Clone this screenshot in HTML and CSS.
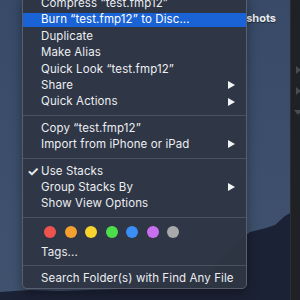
FILE: index.html
```html
<!DOCTYPE html>
<html>
<head>
<meta charset="utf-8">
<link rel="stylesheet" href="styles.css">
</head>
<body>
<div class="desktop">
  <div class="mountain"></div>
  <div class="icon-label">Screenshots</div>
  <div class="window">
    <span class="tri t1"></span>
    <span class="tri t2"></span>
    <span class="tri t3"></span>
  </div>
  <div class="menu">
    <div class="row">Compress “test.fmp12”</div>
    <div class="row active">Burn “test.fmp12” to Disc...</div>
    <div class="row">Duplicate</div>
    <div class="row">Make Alias</div>
    <div class="row">Quick Look “test.fmp12”</div>
    <div class="row sub">Share</div>
    <div class="row sub">Quick Actions</div>
    <div class="sep"></div>
    <div class="row">Copy “test.fmp12”</div>
    <div class="row sub">Import from iPhone or iPad</div>
    <div class="sep"></div>
    <div class="row checked">Use Stacks</div>
    <div class="row sub">Group Stacks By</div>
    <div class="row">Show View Options</div>
    <div class="sep"></div>
    <div class="tags">
      <span class="dot red"></span>
      <span class="dot orange"></span>
      <span class="dot yellow"></span>
      <span class="dot green"></span>
      <span class="dot blue"></span>
      <span class="dot purple"></span>
      <span class="dot gray"></span>
    </div>
    <div class="row">Tags...</div>
    <div class="sep"></div>
    <div class="row">Search Folder(s) with Find Any File</div>
  </div>
</div>
</body>
</html>
```
FILE: styles.css
```css
html, body {
  margin: 0;
  padding: 0;
}
body {
  width: 300px;
  height: 300px;
  overflow: hidden;
  font-family: Inter, "Liberation Sans", sans-serif;
}
.desktop {
  position: relative;
  width: 300px;
  height: 300px;
  background: linear-gradient(180deg, #384a68 0%, #3c4e6b 50%, #40526e 100%);
  overflow: hidden;
}
.mountain {
  position: absolute;
  inset: 0;
  background: #1c2235;
  clip-path: polygon(0 292px, 30px 290px, 60px 291px, 120px 289px, 200px 280px, 240px 240px, 250px 232px, 258px 230px, 266px 228px, 275px 225px, 285px 216px, 292px 212px, 300px 210px, 300px 300px, 0 300px);
}
.icon-label {
  position: absolute;
  top: 11px;
  right: 24px;
  font-size: 11px;
  font-weight: 700;
  color: #e8ecf2;
  text-shadow: 0 1px 1px rgba(0,0,0,0.5);
}
.window {
  position: absolute;
  top: 0;
  left: 290px;
  width: 10px;
  height: 300px;
  background: #202124;
  border-left: 1px solid #2c2d30;
}
.tri {
  position: absolute;
  left: 5px;
  width: 0;
  height: 0;
  border-top: 4px solid transparent;
  border-bottom: 4px solid transparent;
  border-left: 5px solid #4a4b4f;
}
.t1 { top: 66px; }
.t2 { top: 87px; }
.t3 {
  top: 110px;
  border-left: 4px solid transparent;
  border-right: 4px solid transparent;
  border-top: 5px solid #4a4b4f;
  border-bottom: 0;
  left: 3px;
}
.menu {
  position: absolute;
  left: 22px;
  top: -6px;
  width: 225px;
  box-sizing: border-box;
  padding-bottom: 2px;
  background: rgba(46, 54, 68, 0.97);
  border: 1px solid #59606c;
  border-radius: 5px;
  box-shadow: 0 4px 12px rgba(0,0,0,0.35);
  color: #eceef1;
  font-size: 11.5px;
  letter-spacing: 0.1px;
}
.row {
  position: relative;
  height: 16.4px;
  line-height: 16.4px;
  padding: 0 11px 0 18px;
  white-space: nowrap;
}
.row.active {
  color: #ffffff;
  background: linear-gradient(#1a63d6, #1a63d6) 0 1.2px / 100% 14px no-repeat;
}
.row.sub::after {
  content: "";
  position: absolute;
  right: 11px;
  top: 50%;
  margin-top: -4px;
  border-top: 4px solid transparent;
  border-bottom: 4px solid transparent;
  border-left: 7px solid #f2f3f5;
}
.row.checked::before {
  content: "✓";
  position: absolute;
  left: 4px;
  font-size: 13.5px;
  font-weight: 700;
}
.sep {
  height: 10px;
  position: relative;
}
.sep::after {
  content: "";
  position: absolute;
  left: 0;
  right: 0;
  top: 5px;
  height: 1px;
  background: #4a5262;
}
.tags {
  display: flex;
  gap: 8.5px;
  padding: 4px 0 6px 21px;
  height: 12px;
}
.dot {
  width: 12px;
  height: 12px;
  border-radius: 50%;
}
.red { background: #ef5350; }
.orange { background: #f6a02f; }
.yellow { background: #f8d42e; }
.green { background: #4dde4c; }
.blue { background: #3a8ef5; }
.purple { background: #c86ff0; }
.gray { background: #a9a9ab; }
```
